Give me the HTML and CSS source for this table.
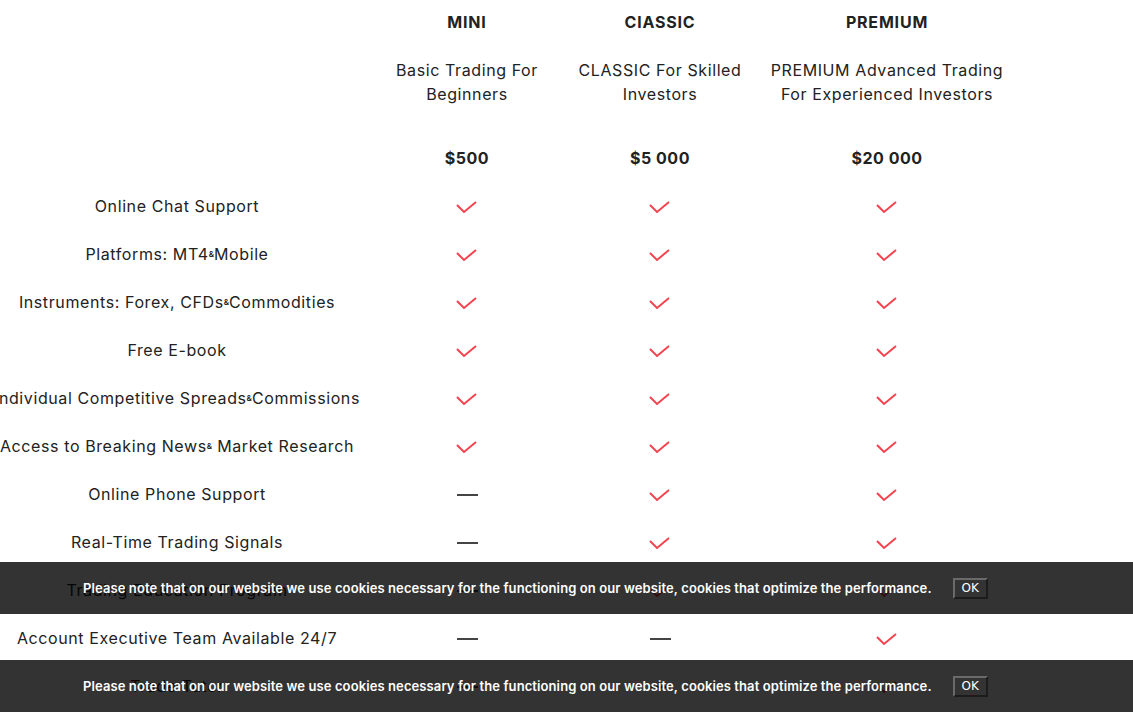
FILE: index.html
```html
<!DOCTYPE html>
<html lang="en">
<head>
<meta charset="utf-8">
<title>Account types</title>
<link rel="stylesheet" href="styles.css">
</head>
<body>
<div class="page">
  <div class="table">
    <div class="cell head"></div>
    <div class="cell head">
      <div class="plan-name">MINI</div>
      <div class="plan-desc">Basic Trading For<br>Beginners</div>
      <div class="plan-price">$500</div>
    </div>
    <div class="cell head">
      <div class="plan-name">ClASSIC</div>
      <div class="plan-desc">CLASSIC For Skilled<br>Investors</div>
      <div class="plan-price">$5 000</div>
    </div>
    <div class="cell head">
      <div class="plan-name">PREMIUM</div>
      <div class="plan-desc">PREMIUM Advanced Trading<br>For Experienced Investors</div>
      <div class="plan-price">$20 000</div>
    </div>

    <div class="cell feat">Online Chat Support</div>
    <div class="cell"><svg class="check" viewBox="0 0 22 13"><polyline points="1,4 8,11 20,1"/></svg></div>
    <div class="cell"><svg class="check" viewBox="0 0 22 13"><polyline points="1,4 8,11 20,1"/></svg></div>
    <div class="cell"><svg class="check" viewBox="0 0 22 13"><polyline points="1,4 8,11 20,1"/></svg></div>

    <div class="cell feat">Platforms: MT4<span class="amp">&amp;</span>Mobile</div>
    <div class="cell"><svg class="check" viewBox="0 0 22 13"><polyline points="1,4 8,11 20,1"/></svg></div>
    <div class="cell"><svg class="check" viewBox="0 0 22 13"><polyline points="1,4 8,11 20,1"/></svg></div>
    <div class="cell"><svg class="check" viewBox="0 0 22 13"><polyline points="1,4 8,11 20,1"/></svg></div>

    <div class="cell feat">Instruments: Forex, CFDs<span class="amp">&amp;</span>Commodities</div>
    <div class="cell"><svg class="check" viewBox="0 0 22 13"><polyline points="1,4 8,11 20,1"/></svg></div>
    <div class="cell"><svg class="check" viewBox="0 0 22 13"><polyline points="1,4 8,11 20,1"/></svg></div>
    <div class="cell"><svg class="check" viewBox="0 0 22 13"><polyline points="1,4 8,11 20,1"/></svg></div>

    <div class="cell feat">Free E-book</div>
    <div class="cell"><svg class="check" viewBox="0 0 22 13"><polyline points="1,4 8,11 20,1"/></svg></div>
    <div class="cell"><svg class="check" viewBox="0 0 22 13"><polyline points="1,4 8,11 20,1"/></svg></div>
    <div class="cell"><svg class="check" viewBox="0 0 22 13"><polyline points="1,4 8,11 20,1"/></svg></div>

    <div class="cell feat">Individual Competitive Spreads<span class="amp">&amp;</span>Commissions</div>
    <div class="cell"><svg class="check" viewBox="0 0 22 13"><polyline points="1,4 8,11 20,1"/></svg></div>
    <div class="cell"><svg class="check" viewBox="0 0 22 13"><polyline points="1,4 8,11 20,1"/></svg></div>
    <div class="cell"><svg class="check" viewBox="0 0 22 13"><polyline points="1,4 8,11 20,1"/></svg></div>

    <div class="cell feat">Access to Breaking News<span class="amp">&amp;</span>&nbsp;Market Research</div>
    <div class="cell"><svg class="check" viewBox="0 0 22 13"><polyline points="1,4 8,11 20,1"/></svg></div>
    <div class="cell"><svg class="check" viewBox="0 0 22 13"><polyline points="1,4 8,11 20,1"/></svg></div>
    <div class="cell"><svg class="check" viewBox="0 0 22 13"><polyline points="1,4 8,11 20,1"/></svg></div>

    <div class="cell feat">Online Phone Support</div>
    <div class="cell"><span class="dash"></span></div>
    <div class="cell"><svg class="check" viewBox="0 0 22 13"><polyline points="1,4 8,11 20,1"/></svg></div>
    <div class="cell"><svg class="check" viewBox="0 0 22 13"><polyline points="1,4 8,11 20,1"/></svg></div>

    <div class="cell feat">Real-Time Trading Signals</div>
    <div class="cell"><span class="dash"></span></div>
    <div class="cell"><svg class="check" viewBox="0 0 22 13"><polyline points="1,4 8,11 20,1"/></svg></div>
    <div class="cell"><svg class="check" viewBox="0 0 22 13"><polyline points="1,4 8,11 20,1"/></svg></div>

    <div class="cell feat">Trading Education Program</div>
    <div class="cell"><span class="dash"></span></div>
    <div class="cell"><svg class="check" viewBox="0 0 22 13"><polyline points="1,4 8,11 20,1"/></svg></div>
    <div class="cell"><svg class="check" viewBox="0 0 22 13"><polyline points="1,4 8,11 20,1"/></svg></div>

    <div class="cell feat">Account Executive Team Available 24/7</div>
    <div class="cell"><span class="dash"></span></div>
    <div class="cell"><span class="dash"></span></div>
    <div class="cell"><svg class="check" viewBox="0 0 22 13"><polyline points="1,4 8,11 20,1"/></svg></div>

    <div class="cell feat">Trade Tutor</div>
    <div class="cell"><span class="dash"></span></div>
    <div class="cell"><span class="dash"></span></div>
    <div class="cell"><svg class="check" viewBox="0 0 22 13"><polyline points="1,4 8,11 20,1"/></svg></div>
  </div>
</div>

<div class="cookie cookie-top">
  <p class="cookie-text">Please note that on our website we use cookies necessary for the functioning on our website, cookies that optimize the performance.</p>
  <button class="cookie-btn" type="button">OK</button>
</div>
<div class="cookie cookie-bottom">
  <p class="cookie-text">Please note that on our website we use cookies necessary for the functioning on our website, cookies that optimize the performance.</p>
  <button class="cookie-btn" type="button">OK</button>
</div>
</body>
</html>
```

FILE: styles.css
```css
html, body {
  margin: 0;
  padding: 0;
  background: #fff;
  overflow: hidden;
}

body {
  font-family: Inter, "Open Sans", sans-serif;
  color: #222;
  font-size: 16px;
  letter-spacing: 0.6px;
  height: 712px;
  position: relative;
}

.page {
  width: 1133px;
}

.table {
  display: grid;
  grid-template-columns: 388px 192px 194px 260px;
  margin-left: -17px;
}

.cell {
  height: 48px;
  display: flex;
  align-items: center;
  justify-content: center;
  text-align: center;
  line-height: 24px;
  white-space: nowrap;
}

.cell.head {
  height: 182px;
  flex-direction: column;
  justify-content: flex-start;
  padding-top: 10px;
  box-sizing: border-box;
}

.plan-name {
  font-weight: 700;
  line-height: 24px;
  letter-spacing: 0.8px;
}

.plan-desc {
  margin-top: 24px;
  line-height: 24px;
}

.plan-price {
  margin-top: 40px;
  font-weight: 700;
  line-height: 24px;
  letter-spacing: 0.5px;
}

.amp {
  font-size: 8px;
  font-weight: 600;
  letter-spacing: 0;
}

.check {
  display: block;
  width: 22px;
  height: 13px;
  margin-top: 2px;
  fill: none;
  stroke: #f4434f;
  stroke-width: 2;
}

.dash {
  display: block;
  width: 21px;
  height: 2px;
  background: #444;
  margin-top: 2px;
}

.cookie {
  position: absolute;
  left: 0;
  right: 0;
  height: 52px;
  background: rgba(0, 0, 0, 0.8);
  display: flex;
  align-items: center;
  padding-left: 83px;
  box-sizing: border-box;
  gap: 21px;
}

.cookie-top {
  top: 562px;
}

.cookie-bottom {
  top: 660px;
}

.cookie-text {
  margin: 0;
  color: #fff;
  font-size: 13px;
  font-weight: 600;
  letter-spacing: 0.1px;
  white-space: nowrap;
}

.cookie-btn {
  font-family: "DejaVu Sans", sans-serif;
  font-size: 12px;
  letter-spacing: 0;
  color: #fff;
  background: #333;
  border: 2px solid;
  border-color: #6a6a6a #1c1c1c #1c1c1c #6a6a6a;
  width: 35px;
  height: 21px;
  padding: 0;
  line-height: 17px;
}
```
